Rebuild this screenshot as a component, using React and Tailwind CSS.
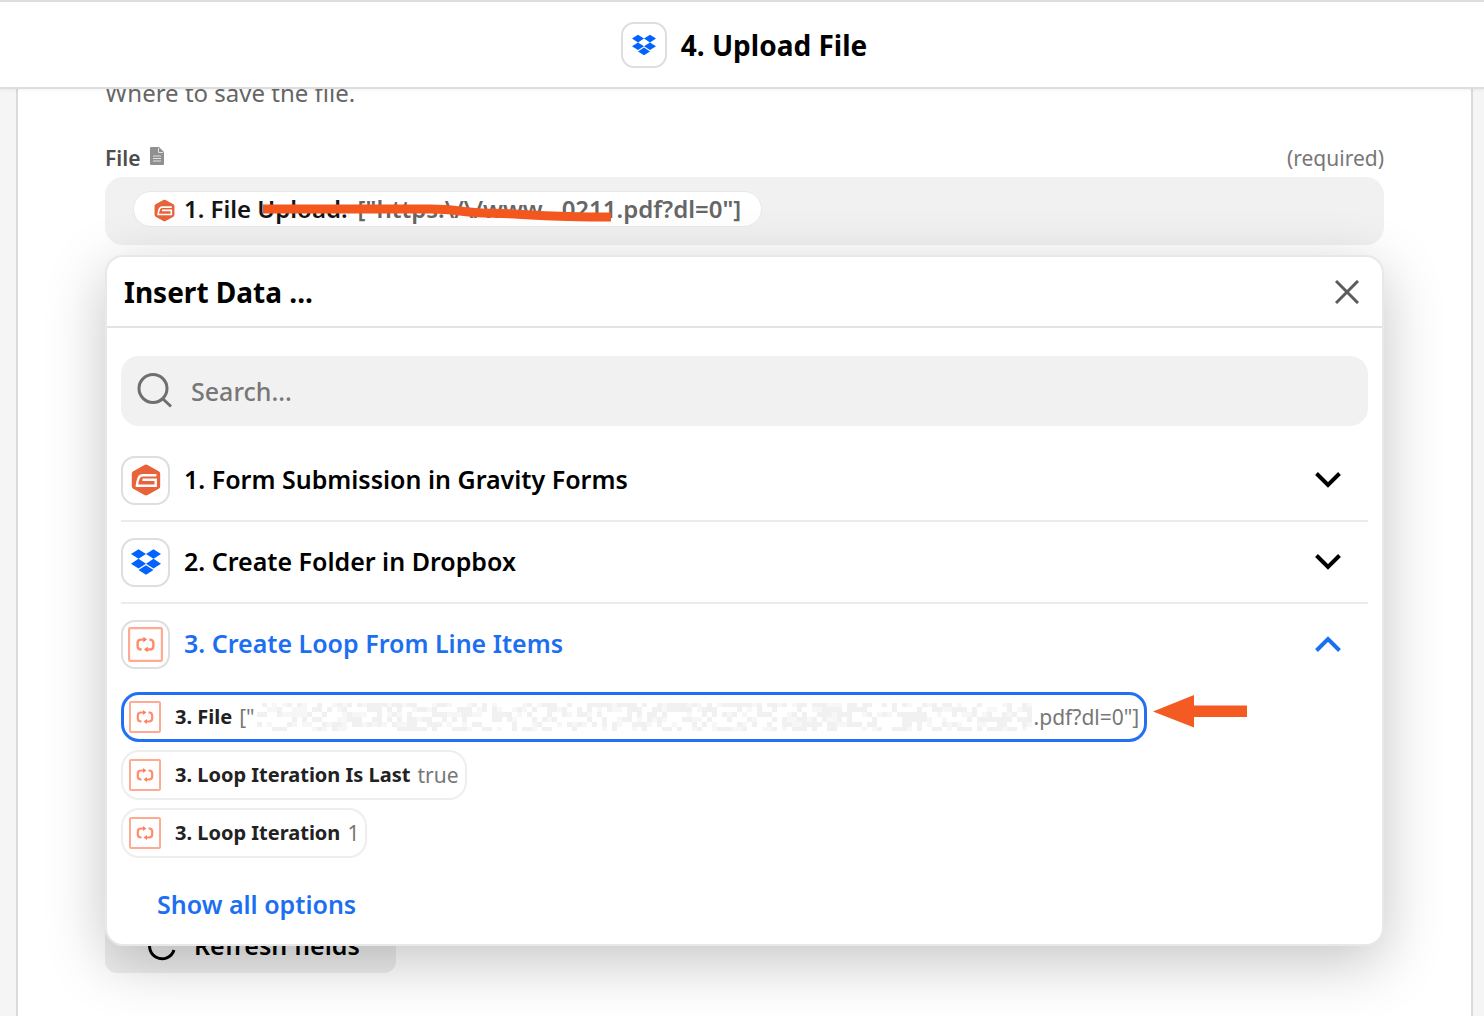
import { useState } from "react";
import clsx from "clsx";

function DropboxIcon({ className }) {
  return (
    <svg viewBox="0 0 24 24" className={className} fill="#0062ff" aria-hidden="true">
      <path d="M6 1.8L0 5.6l6 3.8 6-3.8zM18 1.8l-6 3.8 6 3.8 6-3.8zM0 13.3l6 3.8 6-3.8-6-3.9zM18 9.4l-6 3.9 6 3.8 6-3.8zM6 18.4l6 3.8 6-3.8-6-3.9z" />
    </svg>
  );
}

function GravityIcon({ className }) {
  return (
    <svg viewBox="0 0 30 32" className={className} fill="none" aria-hidden="true">
      <path d="M13.4 1 2.3 7.2Q.8 8.1.8 9.8v12.4q0 1.7 1.5 2.6L13.4 31q1.6.9 3.2 0l11.1-6.2q1.5-.9 1.5-2.6V9.8q0-1.7-1.5-2.6L16.6 1q-1.6-.9-3.2 0z" fill="#e8633a" />
      <path d="M25.4 11.2H11.8q-2.8 0-4 2.5-1.6 3.6-1.9 8h18.8v-6H11.5" stroke="#fff" strokeWidth="2.4" />
    </svg>
  );
}

function LoopIcon({ className }) {
  return (
    <svg viewBox="0 0 32 32" className={className} fill="none" aria-hidden="true">
      <rect x="1" y="1" width="30" height="30" rx="1" stroke="#ffab94" strokeWidth="2" />
      <path
        d="M12.5 20.5H12q-3.200 0-3.200-3.200v-2.600q0-3.200 3.200-3.200h3M19.500 11.500h.5q3.200 0 3.200 3.200v2.600q0 3.200-3.200 3.200h-3"
        stroke="#ff8c6b"
        strokeWidth="2.2"
      />
      <path d="M14 8.900v5.200l3.400-2.600zM18 17.900v5.200l-3.400-2.600z" fill="#ff7e5a" />
    </svg>
  );
}

function Chevron({ open }) {
  return (
    <svg viewBox="0 0 26 16" className="w-[26px] h-4 mr-[27px]" fill="none" stroke="currentColor" strokeWidth="4" aria-hidden="true">
      <path d={open ? "M1.5 14.5 13 3l11.5 11.5" : "M1.5 1.5 13 13 24.5 1.5"} />
    </svg>
  );
}

function AppBox({ className, children }) {
  return (
    <span className={clsx("flex items-center justify-center shrink-0 bg-white border-2 border-[#dedede]", className)}>
      {children}
    </span>
  );
}

// Censored part of a value, drawn as a mosaic of light cells
function Redacted() {
  const cells = [];
  for (let col = 0; col < 155; col++) {
    for (let row = 0; row < 6; row++) {
      const n = Math.abs(Math.sin(col * 12.9898 + row * 78.233) * 43758.5453) % 1;
      if (n > 0.42) {
        cells.push(
          <rect key={`${col}-${row}`} x={col * 5} y={row * 5 - 1} width="5" height="5" fill={n > 0.58 ? "#f1f1f1" : "#f7f7f7"} />
        );
      }
    }
  }
  return (
    <svg viewBox="0 0 775 28" className="w-[775px] h-7 mx-0.5 shrink-0" shapeRendering="crispEdges" aria-hidden="true">
      {cells}
    </svg>
  );
}

const STEPS = [
  { id: 1, title: "1. Form Submission in Gravity Forms", icon: <GravityIcon className="w-[30px] h-8" /> },
  { id: 2, title: "2. Create Folder in Dropbox", icon: <DropboxIcon className="size-[30px]" /> },
  { id: 3, title: "3. Create Loop From Line Items", icon: <LoopIcon className="size-[35px]" /> },
];

function DataChip({ label, selected, children }) {
  return (
    <button
      type="button"
      className={clsx(
        "flex items-center h-[50px] rounded-[18px] leading-8 whitespace-nowrap cursor-pointer",
        selected ? "border-[3px] border-[#2370f4] px-[5px]" : "border-2 border-[#eeeeee] px-1.5"
      )}
    >
      <LoopIcon className="size-8 mr-3.5 shrink-0" />
      <span className="text-xl leading-8 font-bold text-[#222222] mr-[7px]">{label}</span>
      <span className="flex items-center text-[21px] text-[#777777]">{children}</span>
    </button>
  );
}

function InsertData() {
  const [openStep, setOpenStep] = useState(3);

  return (
    <section className="relative z-10 mt-2.5 bg-white border-2 border-[#e8e8e8] rounded-[18px] bg-clip-padding shadow-[0_16px_60px_rgba(0,0,0,0.23)]">
      <div className="flex items-center justify-between h-[71px] pl-[17px] pr-[23px] border-b-2 border-[#e3e3e3]">
        <h2 className="text-[28px] leading-9 font-bold text-black">Insert Data ...</h2>
        <button type="button" aria-label="Close" className="cursor-pointer">
          <svg viewBox="0 0 24 24" className="size-6" stroke="#5c5c5c" strokeWidth="3" aria-hidden="true">
            <path d="M1 1l22 22M23 1L1 23" />
          </svg>
        </button>
      </div>

      <div className="px-3.5 pt-7">
        <label className="flex items-center h-[70px] px-4 rounded-[18px] bg-[#f1f1f1]">
          <svg viewBox="0 0 36 36" className="size-9 mr-[18px] shrink-0" fill="none" stroke="#6f6f6f" strokeWidth="3" aria-hidden="true">
            <circle cx="16" cy="15.5" r="14" />
            <path d="M25 25l9 8.500" />
          </svg>
          <input
            type="text"
            aria-label="Search"
            placeholder="Search..."
            className="flex-1 min-w-0 pt-0.5 bg-transparent outline-none text-[25px] font-medium placeholder:text-[#777777]"
          />
        </label>

        {/* Steps */}
        <div className="pt-3.5">
          {STEPS.map((step) => (
            <button
              key={step.id}
              type="button"
              aria-expanded={openStep === step.id}
              onClick={() => setOpenStep(step.id)}
              className={clsx(
                "flex items-center w-full h-[82px] text-[25px] font-semibold text-left cursor-pointer border-b-2",
                step.id === 3 ? "border-transparent" : "border-[#ebebeb]",
                openStep === step.id ? "text-[#1d6ff2]" : "text-black"
              )}
            >
              <AppBox className="size-[49px] rounded-[14px] mr-3.5">{step.icon}</AppBox>
              <span className="flex-1">{step.title}</span>
              <Chevron open={openStep === step.id} />
            </button>
          ))}
        </div>

        {/* Values of the open step */}
        <div className="flex flex-col items-start gap-2 pt-1.5">
          <div className="flex items-start gap-1.5">
            <DataChip label="3. File" selected>
              ["<Redacted />.pdf?dl=0"]
            </DataChip>
            <svg viewBox="0 0 94 38" className="w-[94px] h-[38px] shrink-0" fill="#f45b22" aria-hidden="true">
              <path d="M0 19.5 41 3v10.500h53V25H41v10.500z" />
            </svg>
          </div>
          <DataChip label="3. Loop Iteration Is Last">true</DataChip>
          <DataChip label="3. Loop Iteration">1</DataChip>
        </div>

        <button type="button" className="block ml-9 mt-7 mb-[22px] text-[25px] leading-9 font-semibold text-[#1d6ff2] cursor-pointer">
          Show all options
        </button>
      </div>
    </section>
  );
}

export default function App() {
  return (
    <div className="flex flex-col min-h-screen overflow-hidden bg-[#f5f5f5] font-['Noto_Sans',sans-serif]">
      <header className="relative z-20 flex items-center justify-center gap-3.5 h-[89px] pl-1 bg-white border-y-2 border-[#dddddd] shadow-[0_1px_3px_rgba(0,0,0,0.06)]">
        <AppBox className="size-[46px] rounded-[13px]">
          <DropboxIcon className="size-6" />
        </AppBox>
        <h1 className="text-[28px] leading-9 font-bold text-black">4. Upload File</h1>
      </header>

      <main className="flex-1 ml-4 mr-[11px] px-[87px] pb-11 bg-white border-x-2 border-[#dadada]">
        <p className="-mt-3 text-2xl leading-8 text-[#666666]">Where to save the file.</p>

        <div className="flex items-center justify-between mt-[33px] text-[21px] leading-8">
          <label htmlFor="file-field" className="flex items-center gap-2.5 font-semibold text-[#4d4d4d]">
            File
            <svg viewBox="0 0 14 18" className="w-3.5 h-[18px] mb-1" aria-hidden="true">
              <path d="M1 0h8l5 5v12q0 1-1 1H1q-1 0-1-1V1q0-1 1-1z" fill="#909090" />
              <path d="M8.5 1v4.500H13M3 9h8M3 11.500h8M3 14h8" fill="none" stroke="#e2e2e2" />
            </svg>
          </label>
          <span className="text-[#777777]">(required)</span>
        </div>

        <button id="file-field" type="button" className="flex items-center w-full h-[68px] mt-[3px] px-7 rounded-[18px] bg-[#f1f1f1] text-2xl cursor-pointer">
          <span className="relative flex items-center h-9 -mt-1 px-5 rounded-full bg-white border border-[#e8e8e8] whitespace-nowrap">
            <GravityIcon className="w-[21px] h-[23px] mr-[9px] mt-0.5" />
            <span className="font-semibold text-[#151515] mr-2.5">1. File Upload:</span>
            <span className="font-semibold text-[#666666]">["https:\/\/www...0211.pdf?dl=0"]</span>
            <svg viewBox="0 0 350 24" className="absolute left-[129px] top-1.5 w-[350px] h-6" fill="none" stroke="#f4581f" strokeWidth="9" aria-hidden="true">
              <path d="M0 11h168c22 0 30 3 52 4 30 0 60 4 128 4" strokeLinejoin="round" />
            </svg>
          </span>
        </button>

        <InsertData />

        <button type="button" className="flex items-center h-[54px] -mt-[27px] pl-[42px] pr-9 rounded-xl bg-[#eeeeee] text-[25px] font-semibold text-black cursor-pointer">
          <svg viewBox="0 0 30 30" className="size-[30px] mr-[17px]" fill="none" stroke="currentColor" strokeWidth="3" aria-hidden="true">
            <path d="M27 19A12.5 12.5 0 1 1 24.5 7M25 1v7h-7" />
          </svg>
          Refresh fields
        </button>
      </main>
    </div>
  );
}
